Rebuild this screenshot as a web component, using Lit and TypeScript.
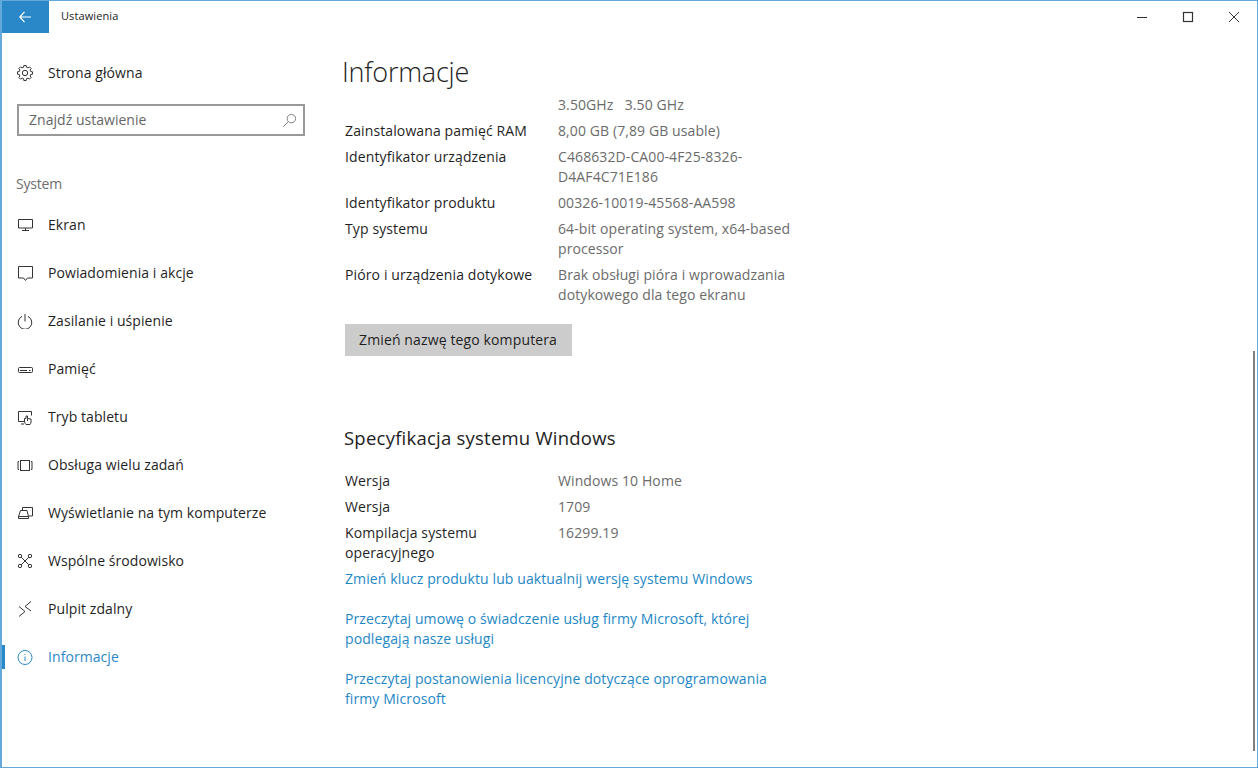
import { LitElement, html, css, svg } from "lit";
import { customElement } from "lit/decorators.js";

const ic = (body: unknown) => html`<svg class="ico" viewBox="0 0 16 16" fill="none" stroke="currentColor" stroke-width="1">${body}</svg>`;

function gearPath() {
  const pts: string[] = [];
  const n = 8;
  for (let i = 0; i < n; i++) {
    const a = (i / n) * Math.PI * 2 - Math.PI / 2;
    const step = (Math.PI * 2) / n;
    const list: [number, number][] = [
      [a - step * 0.2, 7.6],
      [a + step * 0.2, 7.6],
      [a + step * 0.32, 5.9],
      [a + step * 0.68, 5.9],
    ];
    for (const [t, r] of list) {
      pts.push(`${(8 + r * Math.cos(t)).toFixed(2)} ${(8 + r * Math.sin(t)).toFixed(2)}`);
    }
  }
  return `M${pts.join("L")}Z`;
}

const icons = {
  gear: svg`<path d=${gearPath()} stroke-linejoin="round"/><circle cx="8" cy="8" r="2.700"/>`,
  screen: svg`<path d="M1.500 2.500h14v8.500h-14zM8.500 11v2.500M5 13.500h7"/>`,
  note: svg`<path d="M1.500 1.500h14v11.500H10.500L8.500 15.500 6.500 13h-5z"/>`,
  power: svg`<path d="M8 1v7.500M5 3.400a6.800 6.800 0 1 0 6 0"/>`,
  storage: svg`<rect x="1.500" y="6.500" width="14" height="5" rx="1"/><path d="M3 9.500h7M12 9.500h1.500"/>`,
  tablet: svg`<path d="M7.500 12.500H1.500v-10h13v4M4 15h3"/><path d="M9 15.500c-1-1-1.500-2-1.500-3.500V9.500h1.500V7h1.500v2.500l3.500.5v3c0 1-.5 2-1 2.500zM10.500 10v2"/>`,
  multi: svg`<rect x="3.500" y="3.500" width="9" height="10"/><path d="M2 4.500H1v8h1M14 4.500h1v8h-1"/>`,
  project: svg`<path d="M5.500 5.500v-3h10v8.500H12M10 5.500H3.500L1.500 11.500v2h10v-2zM1.500 11.500h10"/>`,
  shared: svg`<circle cx="3" cy="3" r="1.700"/><circle cx="13" cy="3" r="1.700"/><circle cx="3" cy="13" r="1.700"/><circle cx="13" cy="13" r="1.700"/><path d="M4.200 4.200 11.800 11.800M11.800 4.200 4.200 11.800"/>`,
  remote: svg`<path d="M2 5.500 8 10.500 2 15.500M14 .5 8 5.500 14 10"/>`,
  info: svg`<circle cx="8" cy="8.500" r="7"/><path d="M8 7.500v4.500M8 5v1"/>`,
};

const nav: [string, unknown][] = [
  ["Ekran", icons.screen],
  ["Powiadomienia i akcje", icons.note],
  ["Zasilanie i uśpienie", icons.power],
  ["Pamięć", icons.storage],
  ["Tryb tabletu", icons.tablet],
  ["Obsługa wielu zadań", icons.multi],
  ["Wyświetlanie na tym komputerze", icons.project],
  ["Wspólne środowisko", icons.shared],
  ["Pulpit zdalny", icons.remote],
];

const deviceRows: [string, string][] = [
  ["", "3.50GHz   3.50 GHz"],
  ["Zainstalowana pamięć RAM", "8,00 GB (7,89 GB usable)"],
  ["Identyfikator urządzenia", "C468632D-CA00-4F25-8326-D4AF4C71E186"],
  ["Identyfikator produktu", "00326-10019-45568-AA598"],
  ["Typ systemu", "64-bit operating system, x64-based processor"],
  ["Pióro i urządzenia dotykowe", "Brak obsługi pióra i wprowadzania dotykowego dla tego ekranu"],
];
const winRows: [string, string][] = [
  ["Wersja", "Windows 10 Home"],
  ["Wersja", "1709"],
  ["Kompilacja systemu operacyjnego", "16299.19"],
];

@customElement("app-root")
export class AppRoot extends LitElement {
  static styles = css`
    :host {
      display: block;
      width: 1258px;
      height: 768px;
      box-sizing: border-box;
      overflow: hidden;
      position: relative;
      background: #fff;
      border: 1px solid #64a9dc;
      border-left-width: 2px;
      font-family: "Open Sans", "Noto Sans", sans-serif;
      font-size: 14px;
      line-height: 20px;
      color: #1f1f1f;
    }
    .titlebar { display: flex; align-items: center; height: 32px; }
    .back { width: 47px; height: 32px; background: #2b88c8; color: #fff; display: flex; align-items: center; justify-content: center; }
    .back svg { width: 12px; height: 12px; margin-right: 2px; margin-bottom: 1px; }
    .title { margin: 0 0 2px 12px; font-size: 11px; font-weight: 400; color: #222; letter-spacing: 0.1px; }
    .controls { margin-left: auto; display: flex; align-items: center; gap: 0; }
    .ctl { width: 46px; height: 32px; display: flex; align-items: center; justify-content: center; color: #333; }
    .ctl svg { width: 12px; height: 12px; }
    .body { display: flex; }
    .side { width: 341px; flex: none; }
    .home { display: flex; align-items: center; height: 20px; margin-top: 30px; }
    .ico { width: 16px; height: 16px; flex: none; margin-left: 15px; color: #333; }
    .lbl { margin-left: 15px; white-space: nowrap; letter-spacing: 0.07px; }
    .search { display: flex; align-items: center; justify-content: space-between; box-sizing: border-box; margin: 21px 0 0 15px; width: 288px; height: 32px; border: 2px solid #999; padding: 0 6px 0 10px; color: #666; letter-spacing: 0.03px; }
    .search svg { width: 15px; height: 15px; color: #777; }
    .sys { margin: 38px 0 0 14px; color: #6d6d6d; letter-spacing: -0.2px; }
    .nav { margin-top: 7px; }
    .item { display: flex; align-items: center; height: 48px; position: relative; }
    .item.on { color: #2b88c8; }
    .item.on .ico { color: #2b88c8; }
    .item.on::before { content: ""; position: absolute; left: -1px; top: 12px; width: 4px; height: 24px; background: #2b88c8; }
    .main { width: 470px; }
    h1 { font-size: 27px; font-weight: 300; line-height: 36px; margin: 21px 0 0 -1px; color: #222; letter-spacing: -0.2px; }
    .rows { display: flex; flex-direction: column; gap: 6px; margin: 5px 0 0 2px; }
    .row { display: grid; grid-template-columns: 213px 242px; }
    .k { letter-spacing: 0.12px; }
    .v { color: #6b6b6b; letter-spacing: 0.1px; white-space: pre-wrap; }
    .btn { display: inline-flex; align-items: center; box-sizing: border-box; height: 32px; width: 227px; margin: 19px 0 0 2px; padding: 0 14px; background: #ccc; color: #1f1f1f; letter-spacing: 0.13px; white-space: nowrap; }
    h2 { font-size: 18.5px; font-weight: 400; line-height: 26px; margin: 69px 0 0 1px; color: #222; letter-spacing: 0.23px; }
    .rows.w { margin-top: 20px; }
    .links { margin: 6px 0 0 2px; width: 430px; display: flex; flex-direction: column; gap: 20px; color: #1e87c5; letter-spacing: 0.1px; }
    .bar { position: absolute; right: 2px; top: 350px; width: 2px; height: 400px; background: #808080; }
  `;

  private rows(r: [string, string][]) {
    return r.map(([k, v]) => html`<div class="row"><div class="k">${k}</div><div class="v">${v}</div></div>`);
  }

  render() {
    return html`
      <div class="titlebar">
        <div class="back"><svg viewBox="0 0 12 12" fill="none" stroke="currentColor" stroke-width="1.200"><path d="M.5 6h11.500M5.500 .8.800 6l4.700 5.200"/></svg></div>
        <div class="title">Ustawienia</div>
        <div class="controls">
          <div class="ctl"><svg viewBox="0 0 12 12" fill="none" stroke="currentColor"><path d="M1 6.500h10"/></svg></div>
          <div class="ctl"><svg viewBox="0 0 12 12" fill="none" stroke="currentColor" stroke-width="1.200"><rect x="1.500" y="1.500" width="9" height="9"/></svg></div>
          <div class="ctl"><svg viewBox="0 0 12 12" fill="none" stroke="currentColor"><path d="M1 1l10 10M11 1 1 11"/></svg></div>
        </div>
      </div>
      <div class="body">
        <div class="side">
          <div class="home">${ic(icons.gear)}<span class="lbl">Strona główna</span></div>
          <div class="search"><span>Znajdź ustawienie</span><svg viewBox="0 0 16 16" fill="none" stroke="currentColor"><circle cx="10" cy="6" r="4.500"/><path d="M6.800 9.200 1.500 14.500"/></svg></div>
          <div class="sys">System</div>
          <div class="nav">
            ${nav.map(([t, i]) => html`<div class="item">${ic(i)}<span class="lbl">${t}</span></div>`)}
            <div class="item on">${ic(icons.info)}<span class="lbl">Informacje</span></div>
          </div>
        </div>
        <div class="main">
          <h1>Informacje</h1>
          <div class="rows">${this.rows(deviceRows)}</div>
          <div class="btn">Zmień nazwę tego komputera</div>
          <h2>Specyfikacja systemu Windows</h2>
          <div class="rows w">${this.rows(winRows)}</div>
          <div class="links">
            <div>Zmień klucz produktu lub uaktualnij wersję systemu Windows</div>
            <div>Przeczytaj umowę o świadczenie usług firmy Microsoft, której podlegają nasze usługi</div>
            <div>Przeczytaj postanowienia licencyjne dotyczące oprogramowania firmy Microsoft</div>
          </div>
        </div>
      </div>
      <div class="bar"></div>
    `;
  }
}
